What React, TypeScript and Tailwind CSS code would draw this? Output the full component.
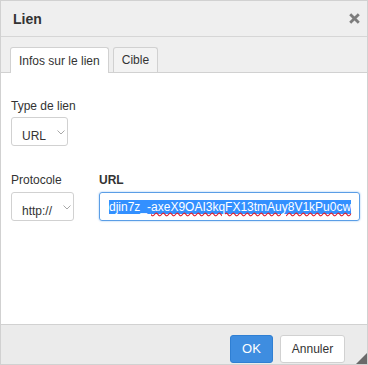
const Chevron = () => (
  <svg width="8" height="5" viewBox="0 0 8 5">
    <path d="M0.5 0.5 L4 4 L7.5 0.5" fill="none" stroke="#a8a8a8" strokeWidth="1" />
  </svg>
);

const App = () => {
  return (
    <div className="relative w-[368px] h-[365px] flex flex-col border border-[#d1d1d1] bg-white overflow-hidden font-['Liberation_Sans',Arial,sans-serif] text-[#333]">
      <div className="h-[36px] shrink-0 flex items-center justify-between bg-[#efefef] border-b border-[#d6d6d6] pl-[12px] pr-[7px]">
        <span className="text-[14px] font-bold leading-none">Lien</span>
        <svg width="11" height="11" viewBox="0 0 11 11">
          <path d="M1.2 1.2 L9.8 9.8 M9.8 1.2 L1.2 9.8" stroke="#7d7d7d" strokeWidth="2.8" />
        </svg>
      </div>

      <div className="h-[36px] shrink-0 flex items-end gap-[4px] bg-[#efefef] border-b border-[#d1d1d1] pl-[9px]">
        <div className="h-[26px] -mb-px px-[8px] flex items-center bg-white border border-b-0 border-[#d1d1d1] rounded-t-[3px] text-[12px]">
          Infos sur le lien
        </div>
        <div className="h-[25px] px-[8px] flex items-center bg-[#f3f3f3] border border-b-0 border-[#d1d1d1] rounded-t-[3px] text-[12px]">
          Cible
        </div>
      </div>

      <div className="flex-1 bg-white pl-[10px] pr-[7px] pt-[26px]">
        <div className="text-[12px] leading-[15px]">Type de lien</div>
        <div className="relative mt-[3px] w-[57px] h-[29px] border border-[#d1d1d1] rounded-[3px] flex items-center pl-[10px] pt-[8px] text-[12px]">
          URL
          <span className="absolute left-[45px] top-[12px] flex">
            <Chevron />
          </span>
        </div>

        <div className="flex gap-[25px] mt-[27px]">
          <div>
            <div className="text-[12px] leading-[15px]">Protocole</div>
            <div className="relative mt-[4px] w-[63px] h-[29px] border border-[#d1d1d1] rounded-[3px] flex items-center pl-[10px] pt-[8px] text-[12px]">
              http://
              <span className="absolute left-[51px] top-[12px] flex">
                <Chevron />
              </span>
            </div>
          </div>
          <div className="flex-1">
            <div className="text-[12px] leading-[15px] font-bold">URL</div>
            <div className="mt-[4px] h-[29px] border border-[#5b9ee6] rounded-[3px] shadow-[0_0_2px_#8cbdf0] flex items-center pl-[9px] overflow-hidden whitespace-nowrap text-[12px]">
              <span className="bg-[#3390ff] text-white leading-[14px]">
                djin7z_-<span className="underline decoration-wavy decoration-[#e0202f] underline-offset-[1px]">axeX9OAI3kqFX13tmAuy8V1kPu0cw</span>
              </span>
            </div>
          </div>
        </div>
      </div>

      <div className="h-[40px] shrink-0 flex justify-end items-start gap-[7px] bg-[#ebebeb] border-t border-[#d1d1d1] pt-[10px] pr-[22px]">
        <div className="w-[43px] h-[28px] flex items-center justify-center rounded-[3px] bg-[#3e8de0] border border-[#2f7fd3] text-white text-[13px]">
          OK
        </div>
        <div className="w-[65px] h-[28px] flex items-center justify-center rounded-[3px] bg-white border border-[#d1d1d1] text-[12px]">
          Annuler
        </div>
      </div>

      <svg width="11" height="11" viewBox="0 0 11 11" className="absolute right-0 bottom-0">
        <path d="M11 0 L11 11 L0 11 Z" fill="#6a6a6a" />
      </svg>
    </div>
  );
};

export default App;
